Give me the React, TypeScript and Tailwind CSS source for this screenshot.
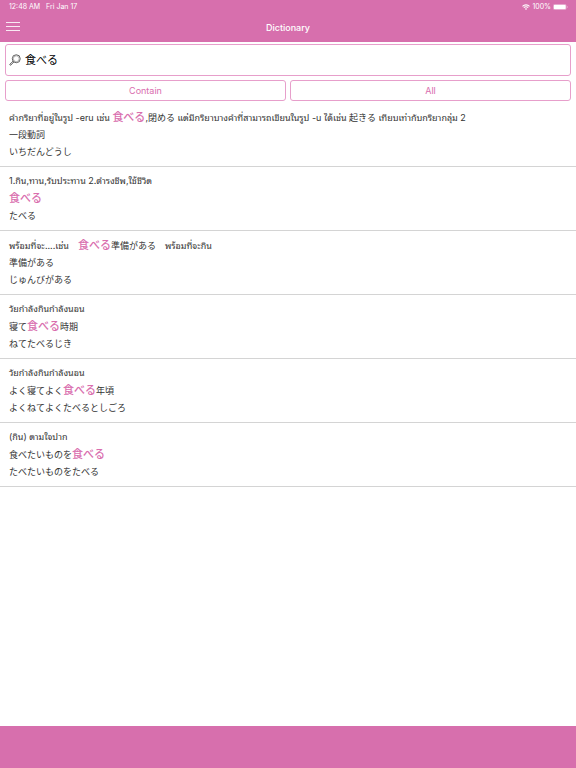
import { useState } from 'react';

const KEYWORD = '食べる';

// [[word]] marks the part of a line that is highlighted
const entries = [
  {
    id: 1,
    lines: [
      'คำกริยาที่อยู่ในรูป -eru เช่น [[食べる]],閉める แต่มีกริยาบางคำที่สามารถเขียนในรูป -u ได้เช่น 起きる เทียบเท่ากับกริยากลุ่ม 2',
      '一段動詞',
      'いちだんどうし',
    ],
  },
  { id: 2, lines: ['1.กิน,ทาน,รับประทาน 2.ดำรงชีพ,ใช้ชีวิต', '[[食べる]]', 'たべる'] },
  { id: 3, lines: ['พร้อมที่จะ....เช่น　[[食べる]]準備がある　พร้อมที่จะกิน', '準備がある', 'じゅんびがある'] },
  { id: 4, lines: ['วัยกำลังกินกำลังนอน', '寝て[[食べる]]時期', 'ねてたべるじき'] },
  { id: 5, lines: ['วัยกำลังกินกำลังนอน', 'よく寝てよく[[食べる]]年頃', 'よくねてよくたべるとしごろ'] },
  { id: 6, lines: ['(กิน) ตามใจปาก', '食べたいものを[[食べる]]', 'たべたいものをたべる'] },
];

function Line({ text }: { text: string }) {
  const parts = text.split(/\[\[|\]\]/);
  const height = parts.length > 1 ? 'h-[18px] leading-[18px]' : 'h-[17px] leading-[17px]';

  return (
    <p className={`${height} whitespace-nowrap`}>
      {parts.map((part, i) =>
        i % 2 === 1 ? (
          <span key={i} className="text-[11px] font-medium text-[#d96eae]">{part}</span>
        ) : (
          <span key={i}>{part}</span>
        )
      )}
    </p>
  );
}

function StatusBar() {
  return (
    <div className="flex h-[14px] items-center justify-between pl-[9px] pr-2 text-[7px] leading-[14px]">
      <div className="flex gap-[6px]">
        <span>12:48 AM</span>
        <span>Fri Jan 17</span>
      </div>
      <div className="flex items-center gap-[2px]">
        <svg className="h-[6px] w-2" viewBox="0 0 16 12" fill="none" stroke="currentColor" strokeWidth="2.2">
          <path d="M1 4.6a10 10 0 0 1 14 0" />
          <path d="M3.6 7.4a6.2 6.2 0 0 1 8.8 0" />
          <path d="M8 11.8 5.7 9.4a3.3 3.3 0 0 1 4.6 0Z" fill="currentColor" stroke="none" />
        </svg>
        <span>100%</span>
        <svg className="h-[6px] w-[15px]" viewBox="0 0 30 12">
          <rect x="0.5" y="0.5" width="26" height="11" rx="3" fill="none" stroke="currentColor" strokeOpacity="0.5" />
          <rect x="1.5" y="1.5" width="24" height="9" rx="2" fill="currentColor" />
          <path d="M28 4a2.2 2.2 0 0 1 0 4Z" fill="currentColor" fillOpacity="0.6" />
        </svg>
      </div>
    </div>
  );
}

export default function App() {
  const [query, setQuery] = useState(KEYWORD);

  return (
    <div className="flex min-h-screen flex-col bg-white font-['Inter','Noto_Sans_CJK_JP',sans-serif]">
      <header className="bg-[#d76fad] text-white">
        <StatusBar />
        <div className="grid h-7 grid-cols-[1fr_auto_1fr] items-center px-[6px]">
          <button type="button" aria-label="Menu" className="mb-1 w-[14px]">
            <svg className="h-[9px] w-[14px]" viewBox="0 0 14 9" stroke="currentColor" strokeWidth="1">
              <path d="M0 .5h14M0 4.5h14M0 8.5h14" strokeOpacity="0.85" />
            </svg>
          </button>
          <h1 className="text-[9px] font-medium leading-3">Dictionary</h1>
        </div>
      </header>

      <div className="px-[5px] pt-[2px]">
        <label className="flex h-8 items-center gap-1 rounded-[3px] border border-[#e79fcb] px-[3px]">
          <svg className="h-3 w-3 shrink-0 text-[#333]" viewBox="0 0 24 24" fill="none" stroke="currentColor" strokeWidth="1.5">
            <circle cx="14.5" cy="9.5" r="8" />
            <circle cx="14.5" cy="9.5" r="5.8" strokeWidth="0.7" />
            <path d="m8.3 14.2-6.5 6.2a1.3 1.3 0 0 0 1.8 1.8l6.3-6.5" />
          </svg>
          <input
            type="text"
            aria-label="Search"
            value={query}
            onChange={(e) => setQuery(e.target.value)}
            className="min-w-0 flex-1 bg-transparent text-[11px] leading-4 text-black outline-none"
          />
        </label>
        <div className="mt-1 grid grid-cols-2 gap-1 text-[9px] text-[#d96eae]">
          <button type="button" className="h-[21px] rounded-[3px] border border-[#e79fcb]">Contain</button>
          <button type="button" className="h-[21px] rounded-[3px] border border-[#e79fcb]">All</button>
        </div>
      </div>

      <ul className="mt-[2px] flex-1 font-['Inter','Noto_Sans_CJK_JP','Noto_Sans_Thai_Looped','Noto_Looped_Thai','Loma','Garuda','Waree',sans-serif] text-[9px] text-[#333]">
        {entries.map((entry) => (
          <li key={entry.id} className="overflow-hidden border-b border-[#d4d4d4] px-[9px] pb-[6px] pt-[5px]">
            {entry.lines.map((line, i) => (
              <Line key={i} text={line} />
            ))}
          </li>
        ))}
      </ul>

      <footer className="h-[42px] bg-[#d76fad]" />
    </div>
  );
}
